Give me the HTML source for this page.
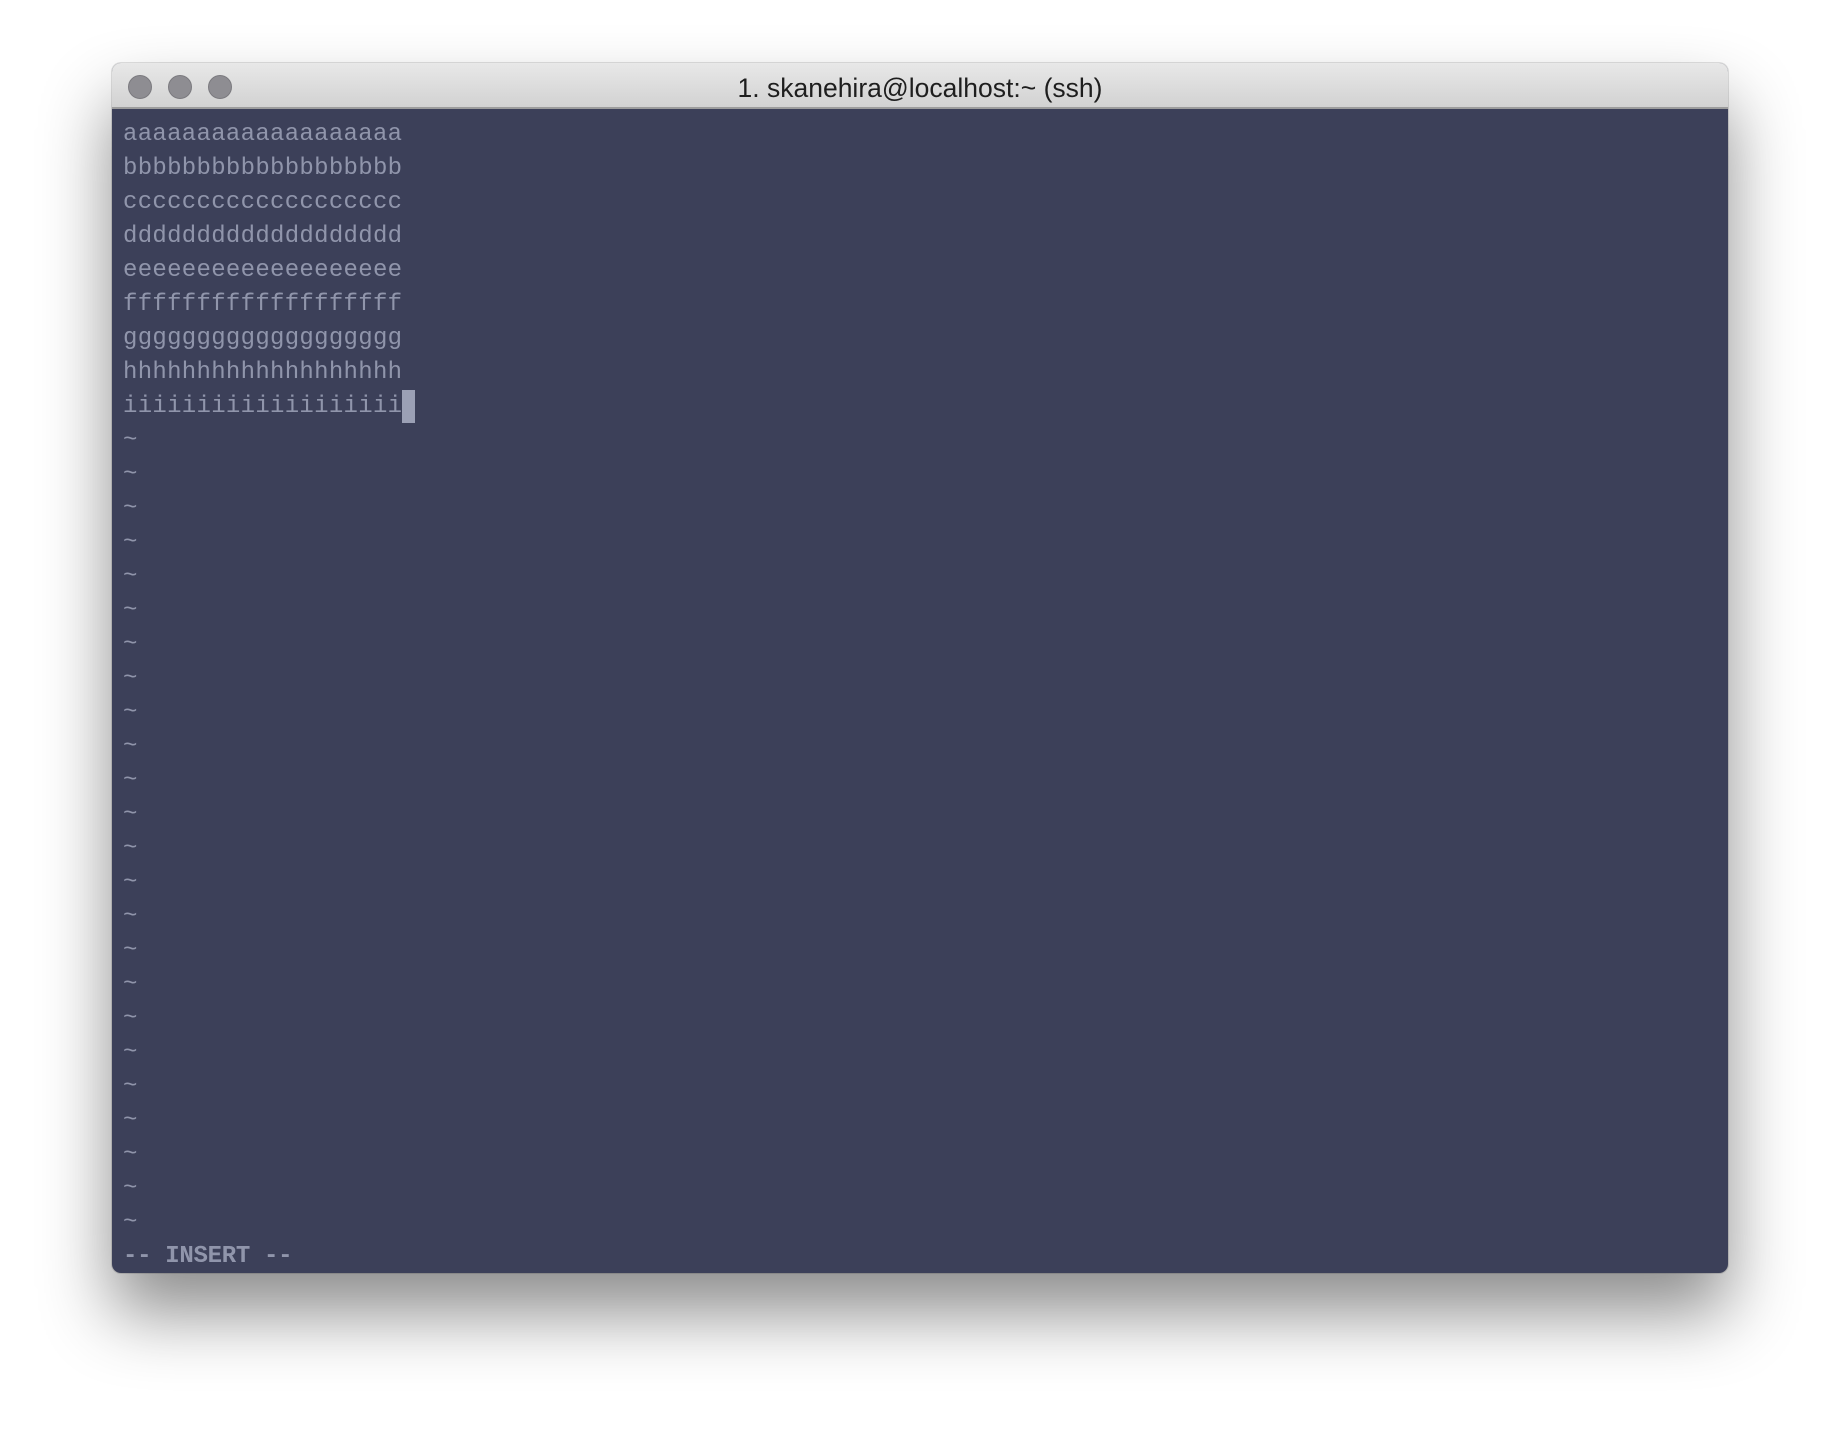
<!DOCTYPE html>
<html><head><style>
html,body{margin:0;padding:0;width:1840px;height:1434px;background:#fff;overflow:hidden}
.win{position:absolute;left:112px;top:63px;width:1616px;height:1210px;border-radius:9px;background:#3c4059;box-shadow:0 40px 70px rgba(0,0,0,.45),0 0 0 1px rgba(0,0,0,.12);overflow:hidden}
.tb{position:absolute;left:0;top:0;width:100%;height:44px;background:linear-gradient(#e8e8e8,#d2d2d2);border-bottom:2px solid #9c9c9c}
.dot{position:absolute;top:12px;width:22px;height:22px;border-radius:50%;background:#8e8d92;border:1px solid #7b7a7f}
.title{position:absolute;left:0;right:0;top:10px;height:46px;line-height:26px;text-align:center;font:26.5px "Liberation Sans",sans-serif;color:#1e1e1e}
.body{position:absolute;left:11px;top:55px;font:24px/34px "Liberation Mono",monospace;color:#9095ab;letter-spacing:0.3px;white-space:pre}
.cur{display:inline-block;width:13px;height:33px;background:#9ba0b5;vertical-align:top}
b{font-weight:bold;letter-spacing:-0.3px}
</style></head><body>
<div class="win">
<div class="tb"><div class="dot" style="left:16px"></div><div class="dot" style="left:56px"></div><div class="dot" style="left:96px"></div><div class="title">1. skanehira@localhost:~ (ssh)</div></div>
<div class="body">aaaaaaaaaaaaaaaaaaa
bbbbbbbbbbbbbbbbbbb
ccccccccccccccccccc
ddddddddddddddddddd
eeeeeeeeeeeeeeeeeee
fffffffffffffffffff
ggggggggggggggggggg
hhhhhhhhhhhhhhhhhhh
iiiiiiiiiiiiiiiiiii<span class="cur"></span>
~
~
~
~
~
~
~
~
~
~
~
~
~
~
~
~
~
~
~
~
~
~
~
~
<b>-- INSERT --</b></div>
</div>
</body></html>
